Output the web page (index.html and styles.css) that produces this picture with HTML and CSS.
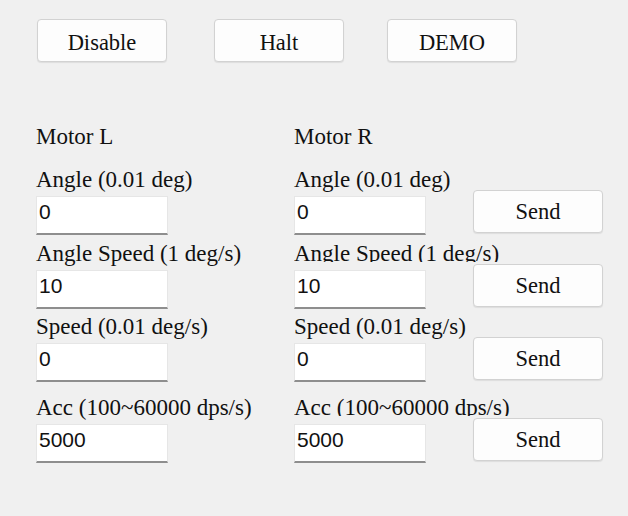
FILE: index.html
```html
<!DOCTYPE html>
<html>
<head>
<meta charset="utf-8">
<link rel="stylesheet" href="styles.css">
</head>
<body>
<div class="toolbar">
  <button class="btn btn-top btn-disable">Disable</button>
  <button class="btn btn-top">Halt</button>
  <button class="btn btn-top">DEMO</button>
</div>
<div class="panel">
  <div class="row titles">
    <div class="label">Motor L</div>
    <div class="label">Motor R</div>
    <div></div>
  </div>
  <div class="row row-first">
    <div class="field"><div class="label">Angle (0.01 deg)</div><input class="input" value="0"></div>
    <div class="field"><div class="label">Angle (0.01 deg)</div><input class="input" value="0"></div>
    <button class="btn btn-send">Send</button>
  </div>
  <div class="row row-aspeed">
    <div class="field"><div class="label">Angle Speed (1 deg/s)</div><input class="input" value="10"></div>
    <div class="field"><div class="label clip">Angle Speed (1 deg/s)</div><input class="input" value="10"></div>
    <button class="btn btn-send">Send</button>
  </div>
  <div class="row row-speed">
    <div class="field"><div class="label">Speed (0.01 deg/s)</div><input class="input" value="0"></div>
    <div class="field"><div class="label">Speed (0.01 deg/s)</div><input class="input" value="0"></div>
    <button class="btn btn-send">Send</button>
  </div>
  <div class="row row-acc">
    <div class="field"><div class="label">Acc (100~60000 dps/s)</div><input class="input" value="5000"></div>
    <div class="field"><div class="label clip">Acc (100~60000 dps/s)</div><input class="input" value="5000"></div>
    <button class="btn btn-send">Send</button>
  </div>
</div>
</body>
</html>
```

FILE: styles.css
```css
html, body {
  margin: 0;
  padding: 0;
  background: #f0f0f0;
  width: 628px;
  height: 516px;
  overflow: hidden;
}
body {
  font-family: "Liberation Serif", "Times New Roman", serif;
  font-size: 23px;
  color: #111;
}
.toolbar {
  display: flex;
  padding: 19px 0 0 37px;
  gap: 43px;
}
.btn {
  box-sizing: border-box;
  width: 130px;
  height: 43px;
  background: #fdfdfd;
  border: 1px solid #d2d2d2;
  border-radius: 4px;
  box-shadow: 0 1px 1px rgba(0,0,0,0.08);
  font-family: "Liberation Serif", "Times New Roman", serif;
  font-size: 22.5px;
  color: #111;
  padding: 0;
  margin: 0;
}
.btn-top {
  padding-top: 5px;
}
.btn-disable {
  margin-right: 4px;
}
.panel {
  padding-left: 36px;
}
.row {
  display: grid;
  grid-template-columns: 258px 179px 130px;
  align-items: end;
}
.titles {
  margin-top: 63px;
}
.row-first { margin-top: 19px; }
.row-aspeed { margin-top: 7px; }
.row-speed { margin-top: 6px; }
.row-acc { margin-top: 14px; }
.label {
  line-height: 24px;
  height: 24px;
  white-space: nowrap;
}
.field .label {
  margin-bottom: 4px;
  width: max-content;
}
.field .label.clip {
  height: 20px;
  overflow: hidden;
  margin-bottom: 8px;
}
.field {
  display: flex;
  flex-direction: column;
}
.input {
  display: block;
  box-sizing: border-box;
  width: 132px;
  height: 39px;
  margin: 0;
  padding: 3px 2px 10px 2px;
  background: #fff;
  border: 1px solid #e6e6e6;
  border-bottom: 2px solid #8e8e8e;
  border-radius: 0;
  font-family: "Liberation Sans", Arial, sans-serif;
  font-size: 21px;
  color: #111;
  outline: none;
}
.btn-send {
  margin-bottom: 2px;
}
```
